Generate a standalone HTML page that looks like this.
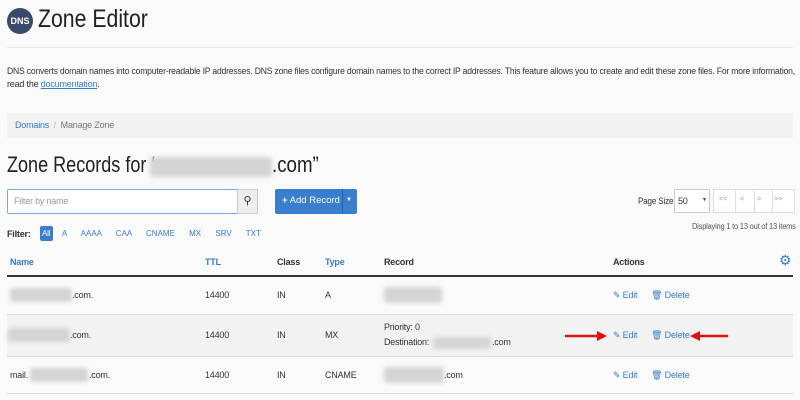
<!DOCTYPE html>
<html><head><style>
*{margin:0;padding:0;box-sizing:border-box}
body{width:800px;height:400px;background:#fafafa;font-family:"Liberation Sans",sans-serif;color:#333;position:relative;overflow:hidden}
.a{position:absolute;white-space:nowrap}
.s{font-size:9px;letter-spacing:-0.2px}
.blue{color:#3a7bc8}
.blur{position:absolute;background:#d4d4d4;border-radius:3px;filter:blur(2px)}
.hl{position:absolute;left:7px;right:7px;height:1px;background:#ddd}
</style></head><body>
<div class="a" style="left:7px;top:8px;width:26px;height:26px;border-radius:50%;background:#3b4a6b;color:#fff;font-size:9px;font-weight:bold;text-align:center;line-height:26px">DNS</div>
<div class="a" style="left:38px;top:5px;font-size:25px;color:#222;transform:scaleX(0.85);transform-origin:left">Zone Editor</div>
<div class="a" style="left:7px;top:47px;width:786px;height:1px;background:#e8e8e8"></div>
<div class="a s" style="left:7px;top:66px;color:#333;transform:scaleX(0.955);transform-origin:left">DNS converts domain names into computer-readable IP addresses. DNS zone files configure domain names to the correct IP addresses. This feature allows you to create and edit these zone files. For more information,</div>
<div class="a s" style="left:7px;top:79px">read the <span class="blue" style="text-decoration:underline">documentation</span>.</div>
<div class="a" style="left:7px;top:113px;width:786px;height:25px;background:#f2f2f2"></div>
<div class="a s" style="left:15px;top:120px"><span class="blue">Domains</span> <span style="color:#bbb">&nbsp;/&nbsp;</span> <span style="color:#777">Manage Zone</span></div>
<div class="a" style="left:7px;top:152px;font-size:22px;color:#222;transform:scaleX(0.82);transform-origin:left">Zone Records for ‘</div>
<div class="blur" style="left:150px;top:157px;width:122px;height:20px"></div>
<div class="a" style="left:272px;top:152px;font-size:22px;color:#222;transform:scaleX(0.85);transform-origin:left">.com”</div>
<div class="a" style="left:7px;top:189px;width:231px;height:25px;border:1px solid #7aa7e0;background:#fff;border-radius:2px"></div>
<div class="a s" style="left:14px;top:196px;color:#999">Filter by name</div>
<div class="a" style="left:237px;top:189px;width:21px;height:25px;border:1px solid #ccc;background:#eee;text-align:center;font-size:11px;line-height:23px">&#9906;</div>
<div class="a" style="left:275px;top:189px;width:82px;height:25px;background:#3a7fcf;border-radius:2px"></div>
<div class="a" style="left:342px;top:189px;width:1px;height:25px;background:#2a64a8"></div>
<div class="a" style="left:282px;top:195px;font-size:9.5px;color:#fff"><b>+</b> Add Record</div>
<div class="a" style="left:346px;top:197px;font-size:6px;color:#fff">▼</div>
<div class="a s" style="left:7px;top:229px"><b>Filter:</b></div>
<div class="a" style="left:40px;top:226px;width:13px;height:15px;background:#3a7fcf;border-radius:2px"></div>
<div class="a s" style="left:42px;top:229px;color:#fff;font-size:8px">All</div>
<div class="a blue" style="left:62px;top:229px;font-size:8px;word-spacing:12px">A AAAA CAA CNAME MX SRV TXT</div>
<div class="a s" style="left:638px;top:196px;color:#333;transform:scaleX(0.9);transform-origin:left">Page Size</div>
<div class="a" style="left:674px;top:189px;width:36px;height:24px;border:1px solid #ccc;background:#fff"></div>
<div class="a s" style="left:678px;top:196px">50</div>
<div class="a" style="left:702px;top:197px;font-size:5px">▼</div>
<div class="a" style="left:713px;top:189px;width:82px;height:24px;border:1px solid #ddd;background:#fff"></div>
<div class="a" style="left:735px;top:189px;width:1px;height:24px;background:#ddd"></div>
<div class="a" style="left:754px;top:189px;width:1px;height:24px;background:#ddd"></div>
<div class="a" style="left:772px;top:189px;width:1px;height:24px;background:#ddd"></div>
<div class="a" style="left:719px;top:196px;font-size:7px;color:#999;word-spacing:11px">&lt;&lt; &lt; &gt; &gt;&gt;</div>
<div class="a s" style="left:692px;top:222px;color:#555;font-size:8px;transform:scaleX(0.93);transform-origin:left">Displaying 1 to 13 out of 13 items</div>
<div class="a s" style="left:10px;top:257px;font-weight:bold;color:#3a7bc8">Name</div>
<div class="a s" style="left:205px;top:257px;font-weight:bold;color:#3a7bc8">TTL</div>
<div class="a s" style="left:277px;top:257px;font-weight:bold">Class</div>
<div class="a s" style="left:325px;top:257px;font-weight:bold;color:#3a7bc8">Type</div>
<div class="a s" style="left:384px;top:257px;font-weight:bold">Record</div>
<div class="a s" style="left:613px;top:257px;font-weight:bold">Actions</div>
<div class="a" style="left:779px;top:252px;font-size:14px;color:#3a7bc8">⚙</div>
<div class="a" style="left:7px;top:275px;width:786px;height:2px;background:#333"></div>
<div class="a" style="left:7px;top:315px;width:786px;height:41px;background:#f2f2f2"></div>
<div class="hl" style="top:314px"></div><div class="hl" style="top:356px"></div><div class="hl" style="top:393px"></div>
<div class="blur" style="left:10px;top:288px;width:62px;height:14px"></div>
<div class="a s" style="left:72px;top:290px">.com.</div>
<div class="blur" style="left:8px;top:328px;width:62px;height:14px"></div>
<div class="a s" style="left:70px;top:330px">.com.</div>
<div class="a s" style="left:10px;top:370px">mail.</div>
<div class="blur" style="left:30px;top:368px;width:58px;height:14px"></div>
<div class="a s" style="left:89px;top:370px">.com.</div>
<div class="a s" style="left:205px;top:290px">14400</div><div class="a s" style="left:205px;top:330px">14400</div><div class="a s" style="left:205px;top:370px">14400</div>
<div class="a s" style="left:277px;top:290px">IN</div><div class="a s" style="left:277px;top:330px">IN</div><div class="a s" style="left:277px;top:370px">IN</div>
<div class="a s" style="left:325px;top:290px">A</div><div class="a s" style="left:325px;top:330px">MX</div><div class="a s" style="left:325px;top:370px">CNAME</div>
<div class="blur" style="left:384px;top:287px;width:58px;height:16px"></div>
<div class="a s" style="left:384px;top:322px">Priority: 0</div>
<div class="a s" style="left:384px;top:337px">Destination:</div>
<div class="blur" style="left:433px;top:337px;width:58px;height:12px"></div>
<div class="a s" style="left:492px;top:337px">.com</div>
<div class="blur" style="left:384px;top:367px;width:60px;height:16px"></div>
<div class="a s" style="left:444px;top:370px">.com</div>
<div class="a s blue" style="left:613px;top:290px">✎ Edit &nbsp;&nbsp;&nbsp;&nbsp;&nbsp;🗑 Delete</div>
<div class="a s blue" style="left:613px;top:330px">✎ Edit &nbsp;&nbsp;&nbsp;&nbsp;&nbsp;🗑 Delete</div>
<div class="a s blue" style="left:613px;top:370px">✎ Edit &nbsp;&nbsp;&nbsp;&nbsp;&nbsp;🗑 Delete</div>
<svg class="a" style="left:560px;top:328px" width="170" height="16">
<path d="M5 8H40" stroke="#d11" stroke-width="2.5"/><path d="M37 3L47 8L37 13Z" fill="#d11"/>
<path d="M138 8H168" stroke="#d11" stroke-width="2.5"/><path d="M140 3L130 8L140 13Z" fill="#d11"/>
</svg>
</body></html>
